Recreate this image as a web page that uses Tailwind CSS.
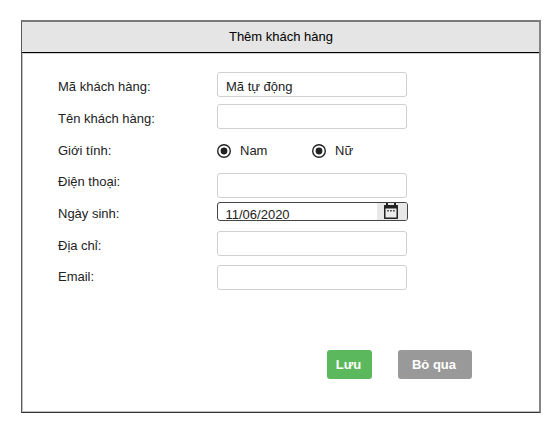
<!DOCTYPE html>
<html lang="vi">
<head>
<meta charset="utf-8">
<title>Thêm khách hàng</title>
<script src="https://cdn.jsdelivr.net/npm/@tailwindcss/browser@4"></script>
</head>
<body class="bg-white pt-5 pl-[21px] font-['Liberation_Sans',Arial,sans-serif] text-[13px] leading-4 text-[#222]">
<main class="flex h-[393px] w-[520px] flex-col border-t-2 border-r-2 border-b border-l border-t-[#7b7b7b] border-r-[#858585] border-b-[#333] border-l-[#5a5a5a] shadow-[inset_1px_-1px_0_#c0c0c0]">
  <header class="flex h-[31px] shrink-0 items-center justify-center border-b border-black bg-[#e5e5e5] text-black shadow-[0_1px_0_#d0d0d0]"><h1 class="pb-px pl-px">Thêm khách hàng</h1></header>
  <form class="flex flex-col pl-9">
    <div class="flex">
      <div class="flex w-[159px] flex-col pt-[26px]">
        <label class="h-8">Mã khách hàng:</label>
        <label class="h-8">Tên khách hàng:</label>
        <span class="h-[31px]">Giới tính:</span>
        <label class="h-8">Điện thoại:</label>
        <label class="h-8">Ngày sinh:</label>
        <label class="h-[31px]">Địa chỉ:</label>
        <label class="h-4">Email:</label>
      </div>
      <div class="flex w-[191px] flex-col pt-[19px]">
        <div class="h-[25px] w-[190px] rounded-[3px] border border-[#d0d0d0] pt-1.5 pl-2">Mã tự động</div>
        <div class="mt-[7px] h-[25px] w-[190px] rounded-[3px] border border-[#d0d0d0]"></div>
        <div class="mt-3.5 flex h-4 items-center">
          <div class="flex w-[95px] items-center gap-[9px]">
            <svg class="size-3.5 overflow-visible" viewBox="0 0 14 14"><circle cx="7" cy="7" r="6.3" fill="none" stroke="#222" stroke-width="1.4"/><circle cx="7" cy="7" r="3.4" fill="#222"/></svg><span>Nam</span>
          </div>
          <div class="flex items-center gap-[9px]">
            <svg class="size-3.5 overflow-visible" viewBox="0 0 14 14"><circle cx="7" cy="7" r="6.3" fill="none" stroke="#222" stroke-width="1.4"/><circle cx="7" cy="7" r="3.4" fill="#222"/></svg><span>Nữ</span>
          </div>
        </div>
        <div class="mt-3.5 h-[25px] w-[190px] rounded-[3px] border border-[#d0d0d0]"></div>
        <div class="mt-1 flex h-[19px] w-[191px] overflow-hidden rounded-[3px] border border-[#444]">
          <span class="w-[159px] pt-1 pl-[7.5px]">11/06/2020</span>
          <span class="flex grow bg-[#e8e8e8] pl-1.5">
            <svg class="h-[17px] w-4 shrink-0" viewBox="0 0 16 17"><path d="M3 0h2v2h6V0h2v2h1.3q.7 0 .7.7v12.6q0 .7-.7.7H1.7q-.7 0-.7-.7V2.700q0-.7.7-.7H3z" fill="#222"/><path d="M2.500 5.500h11v9h-11z" fill="#ececec"/><path d="M4.300 7h1.500v1.500H4.300zM7.200 7h1.500v1.500H7.200zM10.100 7h1.500v1.500h-1.500z" fill="#333"/></svg>
          </span>
        </div>
        <div class="mt-2.5 h-[25px] w-[190px] rounded-[3px] border border-[#d0d0d0]"></div>
        <div class="mt-[9px] h-[25px] w-[190px] rounded-[3px] border border-[#d0d0d0]"></div>
      </div>
    </div>
    <div class="mt-[60px] flex gap-[26px] pl-[269px] font-bold text-white">
      <button type="button" class="h-[28.5px] w-[45px] rounded-[3px] bg-[#5cb85c] pt-px pr-0.5">Lưu</button>
      <button type="button" class="h-[28.5px] w-[74px] rounded-[3px] bg-[#999] pt-px pr-0.5">Bỏ qua</button>
    </div>
  </form>
</main>
</body>
</html>
